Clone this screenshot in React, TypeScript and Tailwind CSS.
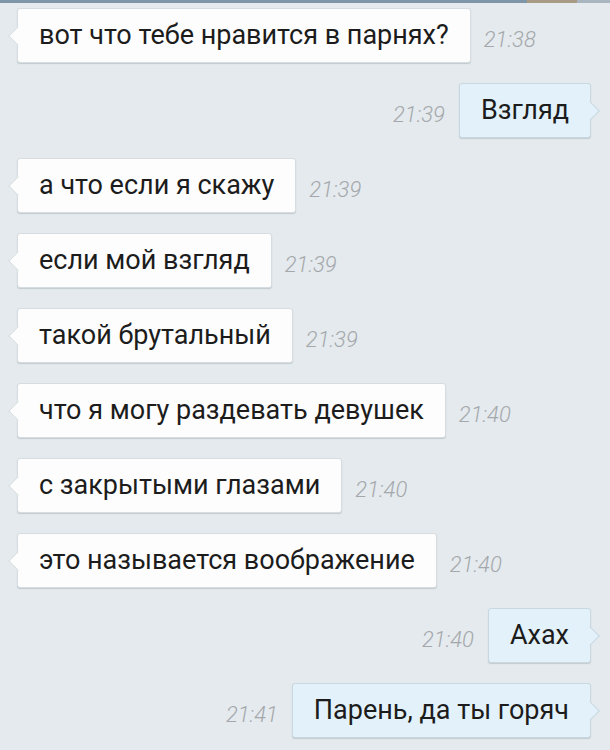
import React from "react";

type Msg = { text: string; time: string; out?: boolean };

const messages: Msg[] = [
  { text: "вот что тебе нравится в парнях?", time: "21:38" },
  { text: "Взгляд", time: "21:39", out: true },
  { text: "а что если я скажу", time: "21:39" },
  { text: "если мой взгляд", time: "21:39" },
  { text: "такой брутальный", time: "21:39" },
  { text: "что я могу раздевать девушек", time: "21:40" },
  { text: "с закрытыми глазами", time: "21:40" },
  { text: "это называется воображение", time: "21:40" },
  { text: "Ахах", time: "21:40", out: true },
  { text: "Парень, да ты горяч", time: "21:41", out: true },
];

function Time({ value }: { value: string }) {
  return (
    <span className="mt-[8px] text-[22px] italic font-light text-[#a4a8ac] leading-none">
      {value}
    </span>
  );
}

function Bubble({ msg }: { msg: Msg }) {
  const out = msg.out;
  return (
    <div
      className={`relative flex items-center h-[55px] px-[21px] rounded-[3px] border shadow-[0_1px_1px_rgba(90,110,120,0.25)] ${
        out ? "bg-[#e3f2fa] border-[#c9d7df]" : "bg-[#fdfdfd] border-[#d6dcdf]"
      }`}
    >
      {/* tail */}
      <span
        className={`absolute top-1/2 w-[14px] h-[14px] -translate-y-1/2 rotate-45 ${
          out
            ? "right-[-7px] bg-[#e3f2fa] border-t border-r border-[#c9d7df]"
            : "left-[-7px] bg-[#fdfdfd] border-b border-l border-[#d6dcdf]"
        }`}
      />
      <span className="relative text-[27px] text-[#1c1c1c] leading-none whitespace-nowrap">
        {msg.text}
      </span>
    </div>
  );
}

export default function App() {
  return (
    <div
      className="w-[610px] h-[750px] overflow-hidden bg-[#e4eaed] relative"
      style={{ fontFamily: "Roboto, 'Noto Sans', sans-serif" }}
    >
      {/* status strip */}
      <div className="flex h-[3px]">
        <div className="w-[527px] bg-[#7f95a8]" />
        <div className="w-[50px] bg-[#a99a84]" />
        <div className="flex-1 bg-[#aab6bf]" />
      </div>

      <div className="flex flex-col gap-[20px] pt-[5px]">
        {messages.map((m, i) =>
          m.out ? (
            <div key={i} className="flex items-center justify-end gap-[14px] pr-[19px]">
              <Time value={m.time} />
              <Bubble msg={m} />
            </div>
          ) : (
            <div key={i} className="flex items-center gap-[13px] pl-[17px]">
              <Bubble msg={m} />
              <Time value={m.time} />
            </div>
          )
        )}
      </div>
    </div>
  );
}
